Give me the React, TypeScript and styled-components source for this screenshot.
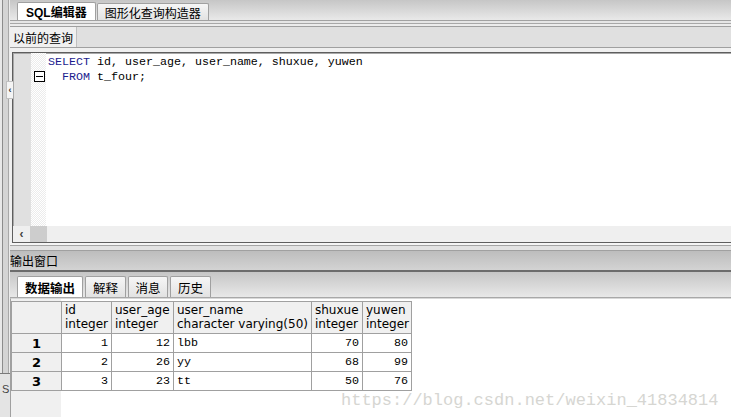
import React from 'react'
import styled, { createGlobalStyle } from 'styled-components'

const GlobalStyle = createGlobalStyle`
  html, body {
    margin: 0;
    padding: 0;
    background: #f0f0f0;
    overflow: hidden;
  }
  body {
    font-family: "DejaVu Sans", "Noto Sans CJK SC", sans-serif;
    font-size: 12px;
    color: #000;
  }
`

const CJK = `"Liberation Sans", "Noto Sans CJK SC", sans-serif`
const MONO = `"Liberation Mono", "Noto Sans CJK SC", monospace`

const Window = styled.div`
  display: flex;
  width: 731px;
  height: 417px;
  overflow: hidden;
  background: #f0f0f0;
`

const LeftStrip = styled.div`
  position: relative;
  z-index: 2;
  display: flex;
  flex-direction: column;
  width: 10px;
  flex-shrink: 0;
  background: linear-gradient(
    to right,
    #e8e8e8 0 2px,
    #8c8c8c 2px 3px,
    #d4d4d4 3px 8px,
    #a8a8a8 8px 9px,
    #ececec 9px 10px
  );
`

const CollapseTab = styled.div`
  margin: 81px 0 0 6px;
  width: 6px;
  height: 16px;
  background: #f4f4f4;
  border: 1px solid #c0c0c0;
  border-right: none;
  font: bold 9px ${CJK};
  line-height: 16px;
  color: #333;
  text-align: center;
`

const BottomStub = styled.div`
  margin-top: auto;
  height: 44px;
  border-top: 1px solid #7a7a7a;
  background: #e4e4e4;
  font: 11px ${CJK};
  color: #444;
  padding: 9px 0 0 2px;
  box-sizing: border-box;
`

const Main = styled.div`
  flex: 1;
  display: flex;
  flex-direction: column;
  min-width: 0;
`

const TabBar = styled.div`
  display: flex;
  align-items: flex-end;
  height: 20px;
  padding-left: 7px;
  background: linear-gradient(#c6c6c6, #e9e9e9);
  border-bottom: 1px solid #a2a2a2;
`

const Tab = styled.div<{ $active?: boolean }>`
  display: flex;
  align-items: center;
  height: ${({ $active }) => ($active ? 18 : 17)}px;
  padding: 0 ${({ $active }) => ($active ? 8 : 7)}px;
  margin-right: 1px;
  box-sizing: border-box;
  border: 1px solid #a0a0a0;
  border-bottom: none;
  border-radius: 2px 2px 0 0;
  background: ${({ $active }) =>
    $active ? '#ffffff' : 'linear-gradient(#f6f6f6, #e2e2e2)'};
  font: ${({ $active }) => ($active ? 'bold' : 'normal')} 12px ${CJK};
  white-space: nowrap;
`

const BarGap = styled.div`
  height: 5px;
  background: linear-gradient(#e6e6e6 0 2px, #a8a8a8 2px 3px, #ececec 3px);
  border-bottom: 1px solid #a0a0a0;
`

const QueryRow = styled.div`
  display: flex;
  align-items: stretch;
  height: 20px;
  border-bottom: 1px solid #a0a0a0;
`

const QueryLabel = styled.div`
  display: flex;
  align-items: center;
  width: 63px;
  padding-left: 3px;
  font: 12px ${CJK};
  background: #f0f0f0;
`

const QueryCombo = styled.div`
  flex: 1;
  background: #e0e0e0;
  border-left: 1px solid #c0c0c0;
`

const EditorWrap = styled.div`
  padding: 4px 0 0 2px;
  background: #f0f0f0;
`

const Editor = styled.div`
  display: flex;
  flex-direction: column;
  height: 189px;
  border-top: 1px solid #5e5e5e;
  border-left: 1px solid #5e5e5e;
  border-bottom: 1px solid #5e5e5e;
  box-shadow: inset 1px 1px 0 #a8a8a8;
  background: #fff;
`

const EditorBody = styled.div`
  flex: 1;
  display: flex;
  min-height: 0;
`

const Gutter = styled.div`
  width: 17px;
  margin-left: 1px;
  margin-top: 1px;
  background: #e0e0e0;
`

const FoldMargin = styled.div`
  width: 15px;
  padding-top: 18px;
  background: repeating-conic-gradient(#ececec 0 25%, #fff 0 50%) 0 0 / 2px 2px;
`

const FoldBox = styled.div`
  position: relative;
  width: 9px;
  height: 9px;
  margin-left: 3px;
  border: 1px solid #000;
  background: #fff;

  &::after {
    content: '';
    position: absolute;
    left: 1px;
    right: 1px;
    top: 4px;
    height: 1px;
    background: #000;
  }
`

const Code = styled.div`
  flex: 1;
  padding: 2px 0 0 2px;
  font: 11.67px ${MONO};
  line-height: 15px;
  white-space: pre;
`

const Keyword = styled.span`
  color: #1c1c8e;
`

const HScroll = styled.div`
  display: flex;
  height: 16px;
  background: #efefef;
`

const ScrollArrow = styled.div`
  width: 17px;
  text-align: center;
  font: bold 12px ${CJK};
  line-height: 16px;
  color: #404040;
`

const ScrollThumb = styled.div`
  width: 17px;
  background: #cdcdcd;
`

const Splitter = styled.div`
  height: 7px;
  background: linear-gradient(#f4f4f4 0 2px, #a4a4a4 2px 3px, #e2e2e2 3px);
  border-bottom: 1px solid #a0a0a0;
`

const PanelTitle = styled.div`
  display: flex;
  align-items: center;
  height: 19px;
  font: 12px ${CJK};
  background: linear-gradient(#bdbdbd, #d3d3d3);
  border-bottom: 2px solid #6c6c6c;
`

const OutputTabs = styled.div`
  display: flex;
  align-items: flex-end;
  height: 25px;
  padding-left: 7px;
  background: linear-gradient(#c6c6c6, #e8e8e8);
  border-bottom: 1px solid #a8a8a8;
`

const OutTab = styled(Tab)`
  height: 21px;
  justify-content: center;
  padding: 0;
  margin-right: 2px;
  font-size: 12.5px;
`

const GridArea = styled.div`
  position: relative;
  flex: 1;
  padding-top: 2px;
  border-left: 1px solid #a0a0a0;
  border-top: 1px solid #d8d8d8;
  background: linear-gradient(to right, #f0f0f0 0 50px, #fff 50px);
`

const Grid = styled.table`
  border-collapse: collapse;
  table-layout: fixed;
`

const HeadCell = styled.th<{ $w: number }>`
  width: ${({ $w }) => $w}px;
  height: 32px;
  padding: 1px 2px 0 3px;
  box-sizing: border-box;
  border: 1px solid #a0a0a0;
  background: #f0f0f0;
  font: normal 12px "DejaVu Sans", sans-serif;
  line-height: 14px;
  text-align: left;
  vertical-align: top;
  white-space: nowrap;
  overflow: hidden;
`

const RowHead = styled.td`
  height: 18px;
  border: 1px solid #a0a0a0;
  background: #f0f0f0;
  font: bold 13px "DejaVu Sans", sans-serif;
  text-align: center;
  padding: 0;
`

const Cell = styled.td<{ $num?: boolean }>`
  height: 18px;
  padding: 0 3px;
  border: 1px solid #a0a0a0;
  background: #fff;
  font: 11.67px ${MONO};
  text-align: ${({ $num }) => ($num ? 'right' : 'left')};
  white-space: nowrap;
`

const Watermark = styled.div`
  position: absolute;
  left: 330px;
  top: 92px;
  font: 17px ${MONO};
  line-height: 19px;
  color: #d6d6d2;
  white-space: nowrap;
`

const columns = [
  { name: 'id', type: 'integer', w: 50 },
  { name: 'user_age', type: 'integer', w: 62 },
  { name: 'user_name', type: 'character varying(50)', w: 138 },
  { name: 'shuxue', type: 'integer', w: 51 },
  { name: 'yuwen', type: 'integer', w: 49 },
]

const rows = [
  [1, 12, 'lbb', 70, 80],
  [2, 26, 'yy', 68, 99],
  [3, 23, 'tt', 50, 76],
]

const outputTabs = [
  { label: '数据输出', w: 66 },
  { label: '解释', w: 41 },
  { label: '消息', w: 40 },
  { label: '历史', w: 41 },
]

export default function App() {
  return (
    <Window>
      <GlobalStyle />
      <LeftStrip>
        <CollapseTab>‹</CollapseTab>
        <BottomStub>S</BottomStub>
      </LeftStrip>
      <Main>
        <TabBar>
          <Tab $active>SQL编辑器</Tab>
          <Tab>图形化查询构造器</Tab>
        </TabBar>
        <BarGap />
        <QueryRow>
          <QueryLabel>以前的查询</QueryLabel>
          <QueryCombo />
        </QueryRow>
        <EditorWrap>
          <Editor>
            <EditorBody>
              <Gutter />
              <FoldMargin>
                <FoldBox />
              </FoldMargin>
              <Code>
                <Keyword>SELECT</Keyword> id, user_age, user_name, shuxue, yuwen
                {'\n'}
                {'  '}
                <Keyword>FROM</Keyword> t_four;
              </Code>
            </EditorBody>
            <HScroll>
              <ScrollArrow>‹</ScrollArrow>
              <ScrollThumb />
            </HScroll>
          </Editor>
        </EditorWrap>
        <Splitter />
        <PanelTitle>输出窗口</PanelTitle>
        <OutputTabs>
          {outputTabs.map((t, i) => (
            <OutTab key={t.label} $active={i === 0} style={{ width: t.w }}>
              {t.label}
            </OutTab>
          ))}
        </OutputTabs>
        <GridArea>
          <Grid>
            <thead>
              <tr>
                <HeadCell $w={50} />
                {columns.map((c) => (
                  <HeadCell key={c.name} $w={c.w}>
                    {c.name}
                    <br />
                    {c.type}
                  </HeadCell>
                ))}
              </tr>
            </thead>
            <tbody>
              {rows.map((r, i) => (
                <tr key={i}>
                  <RowHead>{i + 1}</RowHead>
                  {r.map((v, j) => (
                    <Cell key={j} $num={typeof v === 'number'}>
                      {v}
                    </Cell>
                  ))}
                </tr>
              ))}
            </tbody>
          </Grid>
          <Watermark>https://blog.csdn.net/weixin_41834814</Watermark>
        </GridArea>
      </Main>
    </Window>
  )
}
